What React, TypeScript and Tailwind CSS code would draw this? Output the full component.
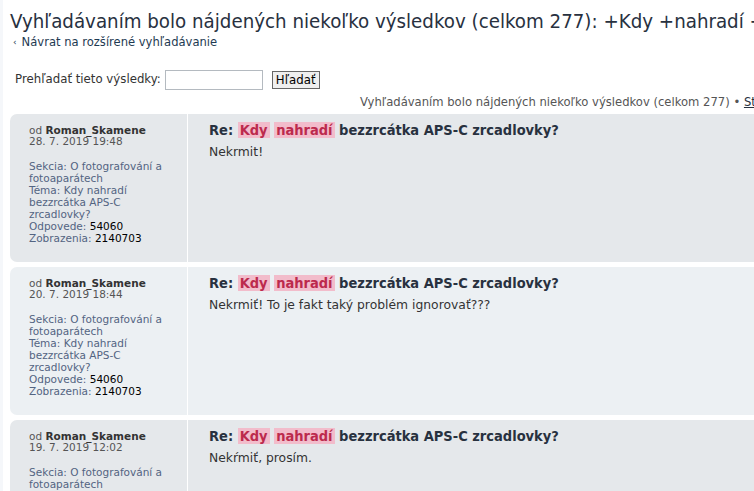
import React from "react";

const posts = [
  { date: "28. 7. 2019 19:48", text: "Nekrmit!", bg: "bg-[#e5e8eb]" },
  { date: "20. 7. 2019 18:44", text: "Nekrmiť! To je fakt taký problém ignorovať???", bg: "bg-[#ecf0f3]" },
  { date: "19. 7. 2019 12:02", text: "Nekŕmiť, prosím.", bg: "bg-[#e5e8eb]" },
];

const condensed = { fontStretch: "condensed" } as const;

function Post({ date, text, bg }: { date: string; text: string; bg: string }) {
  return (
    <div className={`${bg} rounded-[7px] flex h-[148px] w-[1000px] mb-[5px]`}>
      <div className="w-[178px] shrink-0 border-r border-white pl-[19px] pr-[18px] pt-[11px] text-[10.5px] leading-[12px] text-[#536482]">
        <div className="leading-[11px]">
          <span className="text-[#555]">od </span>
          <span className="font-bold text-[#333]">Roman_Skamene</span>
        </div>
        <div className="leading-[11px] text-[#555]">{date}</div>
        <div className="mt-[13px]">Sekcia: O fotografování a fotoaparátech</div>
        <div>Téma: Kdy nahradí bezzrcátka APS-C zrcadlovky?</div>
        <div>
          Odpovede: <span className="text-black">54060</span>
        </div>
        <div>
          Zobrazenia: <span className="text-black">2140703</span>
        </div>
      </div>
      <div className="pl-[21px] pt-[6px]">
        <div className="text-[14.5px] leading-[20px] font-bold text-[#28313f] whitespace-nowrap" style={condensed}>
          Re: <span className="bg-[#f2bccb] text-[#bc2a4d] px-[2px]">Kdy</span>{" "}
          <span className="bg-[#f2bccb] text-[#bc2a4d] px-[2px]">nahradí</span> bezzrcátka APS-C zrcadlovky?
        </div>
        <div className="text-[12.35px] leading-[18px] text-[#333] mt-[3px]">{text}</div>
      </div>
    </div>
  );
}

export default function App() {
  return (
    <div
      className="w-[754px] h-[491px] overflow-hidden bg-[#f5f7fa] pl-[3px]"
      style={{ fontFamily: '"DejaVu Sans", Tahoma, sans-serif' }}
    >
      <div className="bg-white h-full w-[1100px] pl-[7px]">
        <h2 className="text-[20.3px] leading-[24px] text-[#28313f] whitespace-nowrap pt-[9px]" style={condensed}>
          Vyhľadávaním bolo nájdených niekoľko výsledkov (celkom 277): +Kdy +nahradí +bezzrcátka
        </h2>
        <div className="text-[11.55px] leading-[16px] text-[#1e3a52] mt-[1px] pl-[3px] flex items-center">
          <span className="text-[9px] mr-[5px]">‹</span>
          <span>Návrat na rozšírené vyhľadávanie</span>
        </div>
        <div className="flex items-center mt-[20px] pl-[5px] text-[11.75px] text-[#333]">
          <span>Prehľadať tieto výsledky:</span>
          <input className="ml-[4px] w-[98px] h-[20px] border border-[#b4bac0] bg-white" />
          <button className="ml-[9px] h-[18px] px-[3px] border border-[#666] bg-[#efefef] text-[11.75px] leading-[14px] text-black">
            Hľadať
          </button>
        </div>
        <div className="pl-[350px] text-[11.6px] leading-[16px] text-[#555] whitespace-nowrap mt-[4px] mb-[4px]">
          Vyhľadávaním bolo nájdených niekoľko výsledkov (celkom 277) • <span className="underline text-[#28313f]">Stránka 1 z 28</span>
        </div>
        {posts.map((p) => (
          <Post key={p.date} {...p} />
        ))}
      </div>
    </div>
  );
}
